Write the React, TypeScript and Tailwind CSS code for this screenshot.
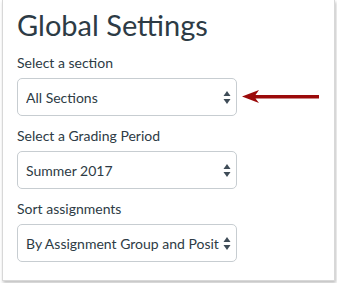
const font = { fontFamily: 'Lato, "Open Sans", sans-serif' }

function SortIcon() {
  return (
    <svg width="8" height="13" viewBox="0 0 8 13" className="shrink-0">
      <path d="M4 0 L7.5 5 L0.5 5 Z" fill="#3f4c57" />
      <path d="M4 13 L7.5 8 L0.5 8 Z" fill="#3f4c57" />
    </svg>
  )
}

function Select({ value }: { value: string }) {
  return (
    <div className="flex h-[38px] w-[220px] shrink-0 items-center rounded-[5px] border border-[#c7cdd1] bg-white pl-[8px] pr-[5px]">
      <span className="flex-1 overflow-hidden whitespace-nowrap text-[14px] text-[#2d3b45]">{value}</span>
      <SortIcon />
    </div>
  )
}

function Field({ label, value, children }: { label: string; value: string; children?: React.ReactNode }) {
  return (
    <div className="mt-[10px]">
      <div className="text-[14px] leading-[20px] text-[#2d3b45]">{label}</div>
      <div className="mt-[5px] flex items-center">
        <Select value={value} />
        {children}
      </div>
    </div>
  )
}

export default function App() {
  return (
    <div className="h-[283px] w-[337px] bg-white" style={font}>
      <div className="ml-[2px] w-[333px] border-x border-b border-[#d8d8d8] bg-white pb-[18px] pl-[14px] pt-[6px] shadow-[1px_2px_3px_rgba(0,0,0,0.25)]">
        <h1 className="text-[29px] leading-[37px] text-[#2d3b45]">Global Settings</h1>
        <Field label="Select a section" value="All Sections">
          <svg width="80" height="16" viewBox="0 0 80 16" className="ml-[4px]">
            <path d="M1 7.5 L18 1 L14.5 6 L78 6 L78 9.5 L14.5 9.5 L18 14 Z" fill="#9b0a0a" />
          </svg>
        </Field>
        <Field label="Select a Grading Period" value="Summer 2017" />
        <Field label="Sort assignments" value="By Assignment Group and Posit" />
      </div>
    </div>
  )
}
